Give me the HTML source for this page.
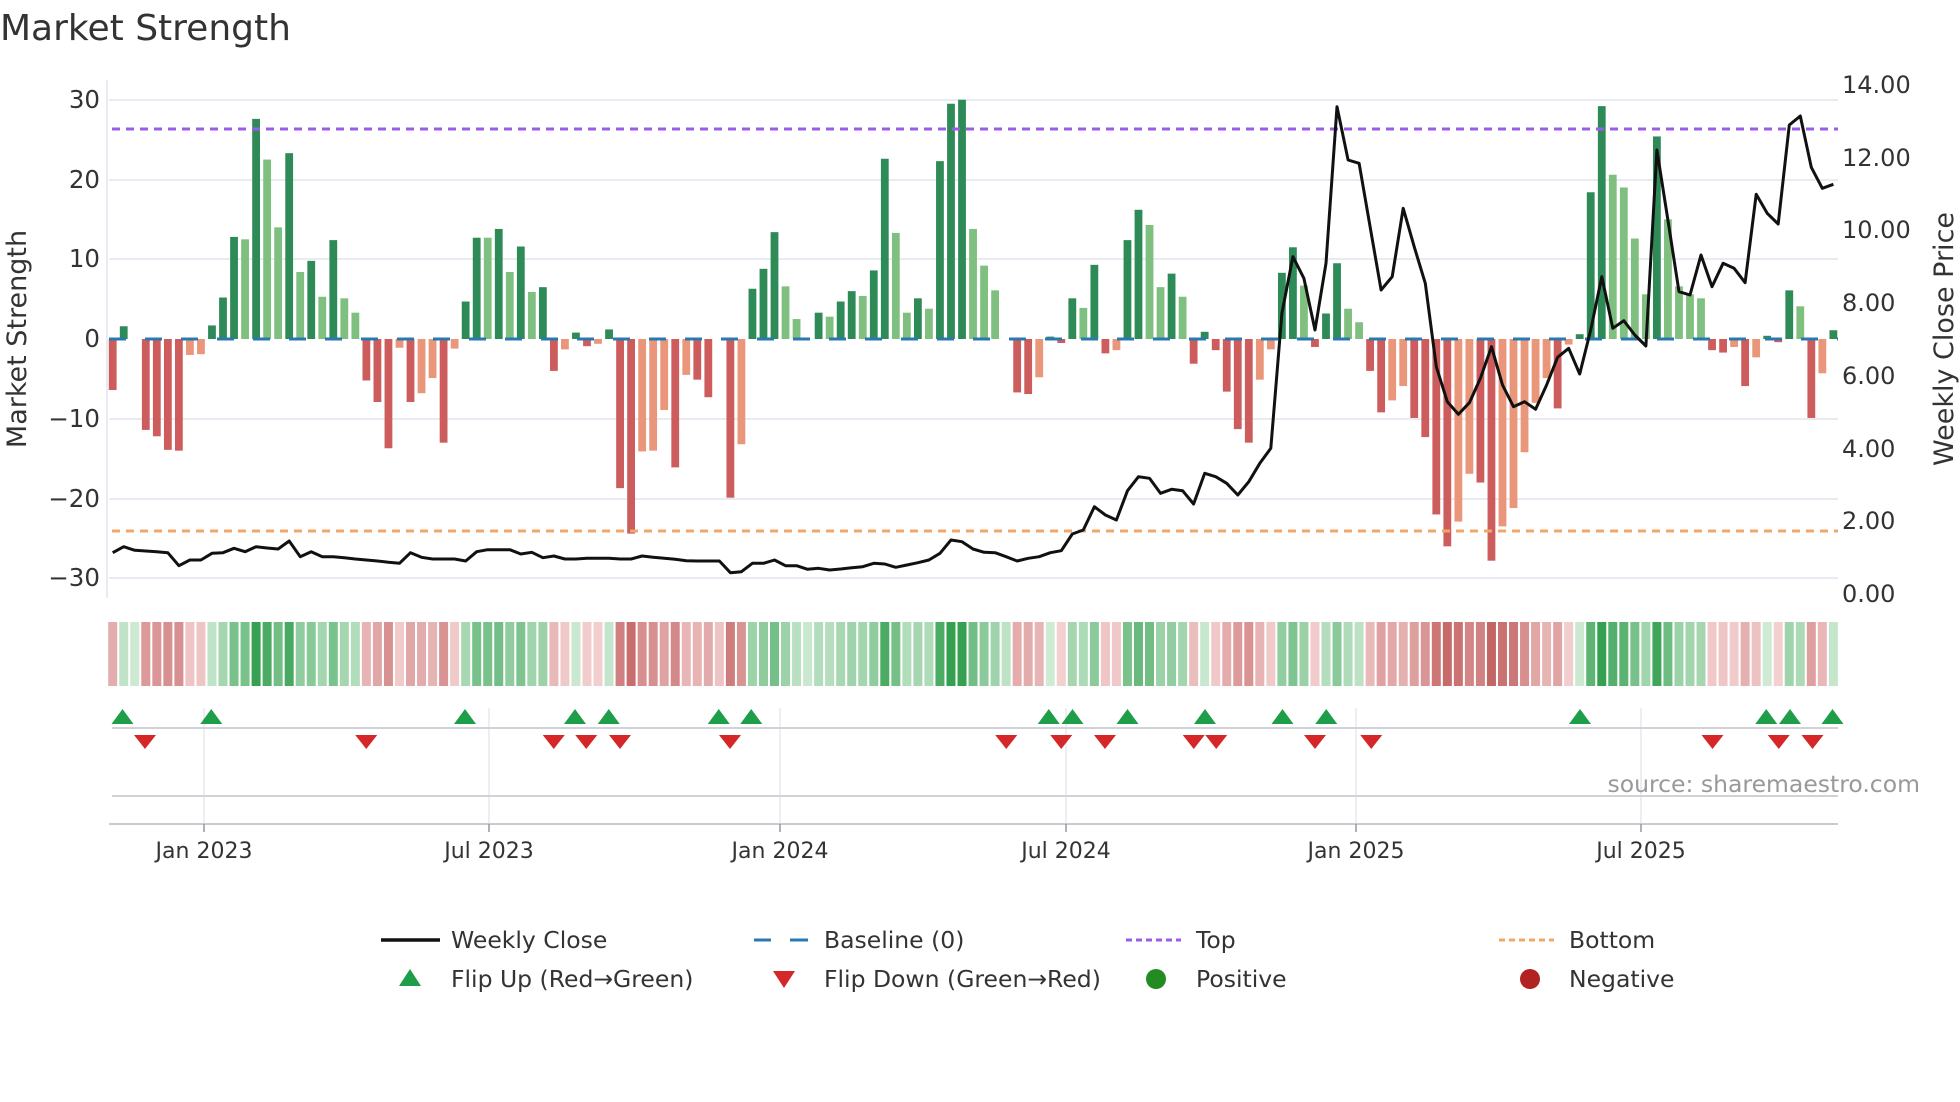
<!DOCTYPE html>
<html><head><meta charset="utf-8"><style>
html,body{margin:0;padding:0;background:#fff;}
svg{display:block;font-family:"DejaVu Sans","Liberation Sans",sans-serif;}
</style></head><body>
<svg id="s" width="1960" height="1102" viewBox="0 0 1960 1102" xmlns="http://www.w3.org/2000/svg">
<rect width="1960" height="1102" fill="#fff"/>
<text x="0" y="40" font-size="36" fill="#333">Market Strength</text>
<g id="grid" stroke="#e9ebf3" stroke-width="2">
<line x1="109" y1="100" x2="1838" y2="100"/><line x1="109" y1="180" x2="1838" y2="180"/>
<line x1="109" y1="259" x2="1838" y2="259"/><line x1="109" y1="419" x2="1838" y2="419"/>
<line x1="109" y1="499" x2="1838" y2="499"/><line x1="109" y1="578" x2="1838" y2="578"/>
<line x1="107" y1="80" x2="107" y2="598"/>
</g>
<g font-size="24.5" fill="#333" text-anchor="end">
<text x="100" y="108">30</text><text x="100" y="188">20</text><text x="100" y="267">10</text>
<text x="100" y="347">0</text><text x="100" y="427">−10</text><text x="100" y="507">−20</text><text x="100" y="586">−30</text>
</g>
<g font-size="24" fill="#333">
<text x="1842" y="93">14.00</text><text x="1842" y="166">12.00</text><text x="1842" y="238">10.00</text>
<text x="1842" y="311">8.00</text><text x="1842" y="384">6.00</text><text x="1842" y="457">4.00</text>
<text x="1842" y="529">2.00</text><text x="1842" y="602">0.00</text>
</g>
<text transform="translate(26,339) rotate(-90)" font-size="27" fill="#333" text-anchor="middle">Market Strength</text>
<text transform="translate(1953,339) rotate(-90)" font-size="27" fill="#333" text-anchor="middle">Weekly Close Price</text>
<g id="bars"></g>
<line x1="109" y1="339" x2="1838" y2="339" stroke="#2a78b0" stroke-width="3" stroke-dasharray="17 19"/>
<line x1="112" y1="129" x2="1838" y2="129" stroke="#9b5de5" stroke-width="3" stroke-dasharray="8 6"/>
<line x1="112" y1="531" x2="1838" y2="531" stroke="#f0a868" stroke-width="3" stroke-dasharray="8 6"/>
<polyline id="price" fill="none" stroke="#111" stroke-width="3" stroke-linejoin="round"/>
<g id="strip"></g>
<g stroke="#e6e8ef" stroke-width="1.5">
<line x1="204" y1="708" x2="204" y2="824"/><line x1="489" y1="708" x2="489" y2="824"/>
<line x1="780" y1="708" x2="780" y2="824"/><line x1="1066" y1="708" x2="1066" y2="824"/>
<line x1="1356" y1="708" x2="1356" y2="824"/><line x1="1641" y1="708" x2="1641" y2="824"/>
</g>
<line x1="112" y1="728" x2="1838" y2="728" stroke="#d0d2d8" stroke-width="2"/>
<line x1="112" y1="796" x2="1838" y2="796" stroke="#d0d2d8" stroke-width="2"/>
<line x1="109" y1="824" x2="1838" y2="824" stroke="#c8cacf" stroke-width="2"/>
<g stroke="#999" stroke-width="1.5">
<line x1="204" y1="824" x2="204" y2="832"/><line x1="489" y1="824" x2="489" y2="832"/>
<line x1="780" y1="824" x2="780" y2="832"/><line x1="1066" y1="824" x2="1066" y2="832"/>
<line x1="1356" y1="824" x2="1356" y2="832"/><line x1="1641" y1="824" x2="1641" y2="832"/>
</g>
<g id="marks"></g>
<text x="1920" y="792" font-size="23.5" fill="#999" text-anchor="end">source: sharemaestro.com</text>
<g font-size="22" fill="#333" text-anchor="middle">
<text x="204" y="858">Jan 2023</text><text x="489" y="858">Jul 2023</text><text x="780" y="858">Jan 2024</text>
<text x="1066" y="858">Jul 2024</text><text x="1356" y="858">Jan 2025</text><text x="1641" y="858">Jul 2025</text>
</g>
<g font-size="23.5" fill="#333">
<line x1="381" y1="940" x2="440" y2="940" stroke="#111" stroke-width="3.5"/>
<text x="451" y="948">Weekly Close</text>
<line x1="754" y1="940" x2="808" y2="940" stroke="#2a78b0" stroke-width="3" stroke-dasharray="17 19" />
<line x1="790" y1="940" x2="808" y2="940" stroke="#2a78b0" stroke-width="3"/>
<text x="824" y="948">Baseline (0)</text>
<line x1="1126" y1="940" x2="1181" y2="940" stroke="#9b5de5" stroke-width="3" stroke-dasharray="6 4"/>
<text x="1196" y="948">Top</text>
<line x1="1499" y1="940" x2="1554" y2="940" stroke="#f0a868" stroke-width="3" stroke-dasharray="6 4"/>
<text x="1569" y="948">Bottom</text>
<polygon points="399,986 421,986 410,969" fill="#1f9e4a"/>
<text x="451" y="987">Flip Up (Red→Green)</text>
<polygon points="773,971 795,971 784,988" fill="#d62728"/>
<text x="824" y="987">Flip Down (Green→Red)</text>
<circle cx="1156" cy="979" r="10" fill="#228b22"/>
<text x="1196" y="987">Positive</text>
<circle cx="1530" cy="979" r="10" fill="#b22222"/>
<text x="1569" y="987">Negative</text>
</g>
</svg>
<script>
var B="-6.4R,1.6D,0,-11.4R,-12.2R,-13.9R,-14R,-2S,-1.9S,1.7D,5.2D,12.8D,12.5L,27.6D,22.5L,14L,23.3D,8.4L,9.8D,5.3L,12.4D,5.1L,3.3L,-5.2R,-7.9R,-13.7R,-1.1S,-7.9R,-6.8S,-4.9S,-13R,-1.2S,4.7D,12.7D,12.7L,13.8D,8.4L,11.6D,5.9L,6.5D,-4R,-1.3S,0.8D,-0.9R,-0.6S,1.2D,-18.7R,-24.4R,-14.1S,-14S,-8.9S,-16.1R,-4.5S,-5.1R,-7.3R,0,-19.9R,-13.2S,6.3D,8.8D,13.4D,6.6L,2.5L,0,3.3D,2.8L,4.7D,6D,5.4L,8.6D,22.6D,13.3L,3.3L,5.1D,3.8L,22.3D,29.5D,30D,13.8L,9.2L,6.1L,0,-6.7R,-6.9R,-4.8S,0.3D,-0.5R,5.1D,3.9L,9.3D,-1.8R,-1.4S,12.4D,16.2D,14.3L,6.5L,8.2D,5.3L,-3.1R,0.9D,-1.4R,-6.6R,-11.3R,-13R,-5.1S,-1.3S,8.3D,11.5D,6.7L,-1R,3.2D,9.5D,3.8L,2.1L,-4R,-9.2R,-7.7S,-5.9S,-9.9R,-12.3R,-22R,-26R,-22.9S,-16.9S,-18R,-27.8R,-23.5S,-21.2S,-14.2S,-8S,-4.9S,-8.7R,-0.7S,0.6D,18.4D,29.2D,20.6L,19L,12.6L,5.6L,25.4D,15L,6.6L,5.6L,5.1L,-1.4R,-1.7R,-1S,-5.9R,-2.3S,0.4D,-0.4R,6.1D,4.1L,-9.9R,-4.3S,1.1D".split(",");
var P=[1418,1400,1411,1413,1415,1418,1457,1440,1440,1420,1418,1405,1415,1400,1404,1407,1383,1430,1415,1430,1430,1433,1437,1440,1443,1447,1450,1418,1432,1437,1437,1437,1443,1415,1409,1409,1409,1422,1417,1433,
1428,1437,1437,1435,1435,1435,1437,1437,1428,1432,1435,1438,1442,1443,1443,1443,1478,1475,1450,1450,1440,1457,1457,1468,1465,1470,1467,1463,1460,1450,1452,1462,1455,1448,1440,1420,1380,1385,1407,1417,1418,
1430,1443,1435,1430,1418,1412,1362,1350,1280,1305,1320,1232,1190,1195,1240,1228,1232,1272,1180,1190,1210,1245,1205,1150,1105,700,530,595,750,550,80,240,250,440,630,590,385,500,610,860,965,
1003,968,895,800,915,980,965,988,915,832,805,882,750,590,745,722,765,798,210,420,635,645,525,620,550,565,608,343,400,432,135,108,262,325,313];
var C={D:"#2e8b57",L:"#7fbf7f",R:"#cd5c5c",S:"#e9967a"};
var ns="http://www.w3.org/2000/svg";
function el(t,a,p){var e=document.createElementNS(ns,t);for(var k in a)e.setAttribute(k,a[k]);document.getElementById(p).appendChild(e);return e;}
function X(i){return 112.7+11.03*i;}
function mix(a,b,t){var r="#";for(var j=0;j<3;j++){var v=Math.round(a[j]+(b[j]-a[j])*t);r+=("0"+v.toString(16)).slice(-2);}return r;}
var last=0;
for(var i=0;i<B.length;i++){
 var s=B[i],v=parseFloat(s),ty=s.slice(-1);
 if(v!==0){var y=339-7.975*v;var y0=Math.min(339,y),h=Math.abs(339-y);
  el("rect",{x:X(i)-3.9,y:y0,width:7.8,height:h,fill:C[ty]},"bars");last=v;}
 var vv=v!==0?v:last*0.3;
 var t=Math.pow(Math.min(1,Math.abs(vv)/28),0.7);
 var col=vv>=0?mix([214,238,218],[52,160,80],t):mix([246,214,214],[196,100,100],t);
 el("rect",{x:X(i)-4.5,y:622,width:9,height:64,fill:col},"strip");
}
var pts=[];for(var i=0;i<P.length;i++){pts.push(X(i).toFixed(1)+","+(P[i]/3+80).toFixed(1));}
document.getElementById("price").setAttribute("points",pts.join(" "));
var up=[98,169,372,460,487,575,601,839,858,902,964,1026,1061,1264,1413,1432,1466];
var dn=[116,293,443,469,496,584,805,849,884,955,973,1052,1097,1370,1423,1450];
up.forEach(function(d){var x=d*1.25;el("polygon",{points:(x-11)+",724 "+(x+11)+",724 "+x+",709",fill:"#1f9e4a"},"marks");});
dn.forEach(function(d){var x=d*1.25;el("polygon",{points:(x-11)+",735 "+(x+11)+",735 "+x+",749",fill:"#d62728"},"marks");});
</script>
</body></html>
